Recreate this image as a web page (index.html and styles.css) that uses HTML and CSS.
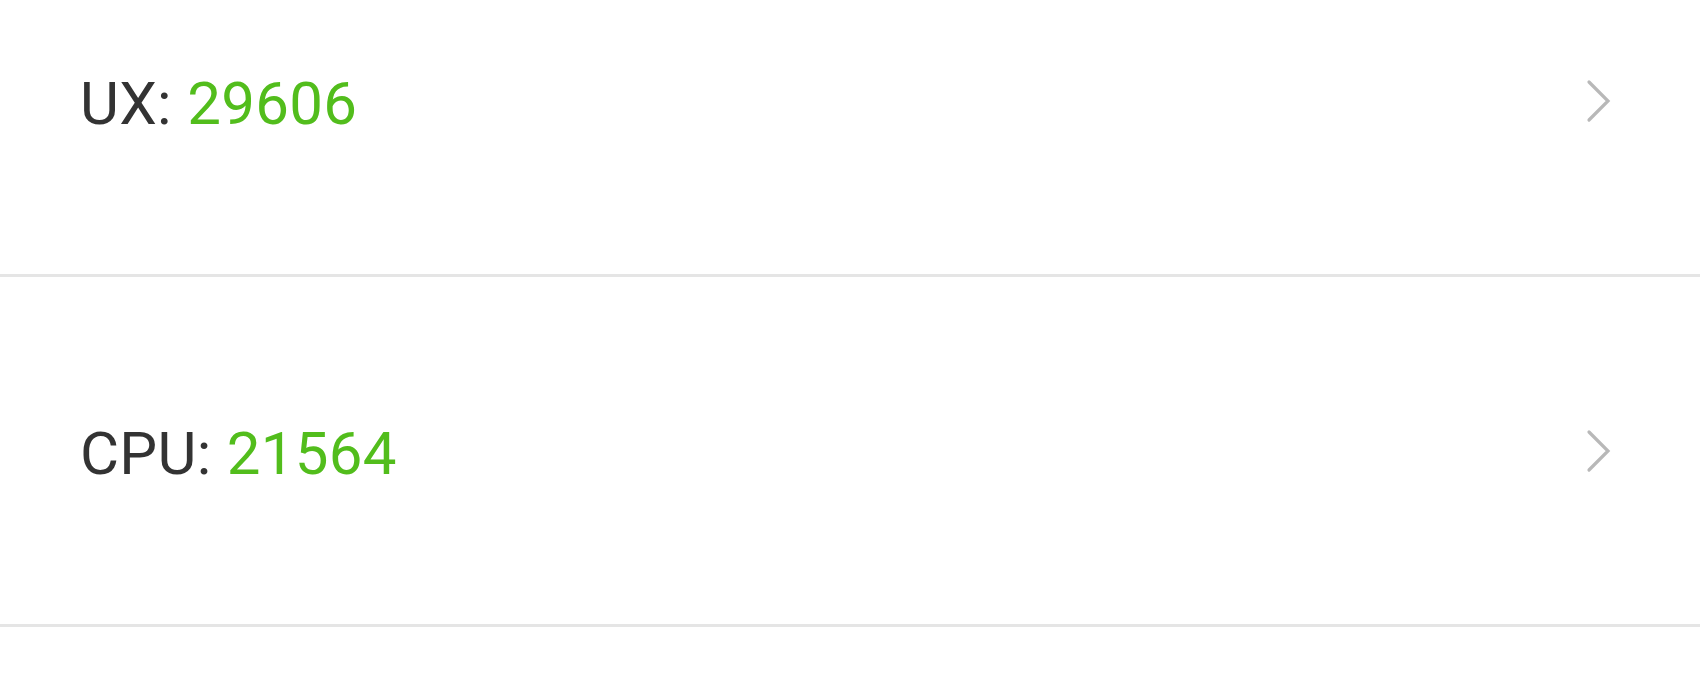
FILE: index.html
```html
<!DOCTYPE html>
<html>
<head>
<meta charset="utf-8">
<link rel="stylesheet" href="styles.css">
</head>
<body>
<div class="list">
  <div class="row">
    <span class="label">UX: <span class="score">29606</span></span>
    <svg class="chev" width="26" height="44" viewBox="0 0 26 44"><polyline points="3,3 22,22 3,41" fill="none" stroke="#b8b8b8" stroke-width="3.2" stroke-linecap="round" stroke-linejoin="miter"/></svg>
  </div>
  <div class="row">
    <span class="label">CPU: <span class="score">21564</span></span>
    <svg class="chev" width="26" height="44" viewBox="0 0 26 44"><polyline points="3,3 22,22 3,41" fill="none" stroke="#b8b8b8" stroke-width="3.2" stroke-linecap="round" stroke-linejoin="miter"/></svg>
  </div>
  <div class="row"></div>
</div>
</body>
</html>
```
FILE: styles.css
```css
html, body {
  margin: 0;
  padding: 0;
  background: #ffffff;
  overflow: hidden;
}
.list {
  margin-top: -73px;
}
.row {
  height: 347px;
  display: flex;
  align-items: center;
  justify-content: space-between;
  padding: 0 88px 0 80px;
  border-bottom: 3px solid #e5e5e5;
}
.label {
  font-family: Roboto, "Noto Sans", sans-serif;
  font-size: 60px;
  letter-spacing: 0.3px;
  color: #333333;
  line-height: 1;
  padding-top: 6px;
}
.score {
  color: #52bd1c;
}
.chev {
  display: block;
}
```
